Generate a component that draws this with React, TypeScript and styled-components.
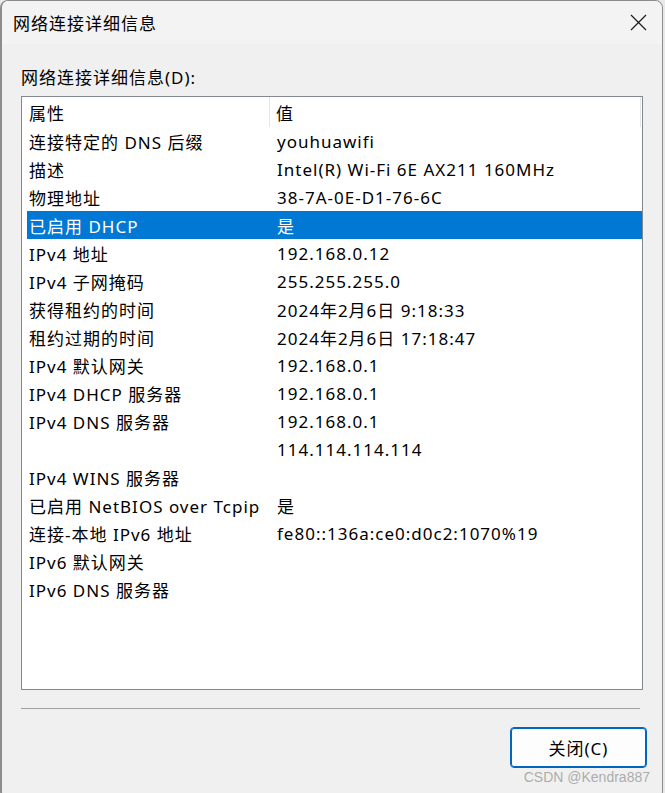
import React from 'react';
import styled, { createGlobalStyle } from 'styled-components';

const Global = createGlobalStyle`
  html, body {
    margin: 0;
    padding: 0;
    background: #e9e9e9;
  }
  body {
    font-family: 'Noto Sans', 'Noto Sans CJK SC', sans-serif;
    letter-spacing: 1px;
  }
`;

const Window = styled.div`
  box-sizing: border-box;
  position: relative;
  width: 663px;
  height: 800px;
  background: #f0f0f0;
  border: 1px solid #8c8c8c;
  border-left-width: 2px;
  border-radius: 8px;
  overflow: hidden;
  color: #000;
`;

const TitleBar = styled.div`
  display: flex;
  align-items: center;
  justify-content: space-between;
  height: 43px;
  padding: 0 15px 0 11px;
  background: #f3f3f3;
  font-size: 17px;
`;

const CloseIcon = styled.svg`
  width: 17px;
  height: 17px;
`;

const Body = styled.div`
  padding: 23px 18px 0 19px;
`;

const Label = styled.div`
  font-size: 17px;
  line-height: 22px;
  height: 22px;
  margin-bottom: 7px;
`;

const ListBox = styled.div`
  box-sizing: border-box;
  width: 622px;
  height: 594px;
  background: #fff;
  border: 1px solid #828790;
  font-size: 17px;
`;

const HeaderRow = styled.div`
  display: grid;
  grid-template-columns: 248px 371px;
  height: 30px;
`;

const HeaderCell = styled.div<{ $first?: boolean }>`
  display: flex;
  align-items: center;
  padding-left: ${p => (p.$first ? '7px' : '6px')};
  border-right: 1px solid #e5e5e5;
`;

const Row = styled.div<{ $selected?: boolean }>`
  display: grid;
  grid-template-columns: 243px 371px;
  height: 28px;
  margin-left: 5px;
  align-items: center;
  background: ${p => (p.$selected ? '#0078d4' : 'transparent')};
  color: ${p => (p.$selected ? '#fff' : '#000')};
  white-space: nowrap;
`;

const Cell = styled.div<{ $value?: boolean }>`
  padding-left: ${p => (p.$value ? '7px' : '2px')};
`;

const Separator = styled.div`
  width: 619px;
  height: 1px;
  margin-top: 18px;
  background: #a0a0a0;
`;

const Footer = styled.div`
  display: flex;
  justify-content: flex-end;
  padding-top: 18px;
  margin-right: -3px;
`;

const Button = styled.button`
  box-sizing: border-box;
  width: 137px;
  height: 41px;
  background: #fdfdfd;
  border: 1px solid #0067c0;
  box-shadow: inset 0 0 0 1px #0067c0;
  border-radius: 4px;
  font-family: inherit;
  letter-spacing: inherit;
  font-size: 17px;
  color: #000;
`;

const Watermark = styled.div`
  position: absolute;
  right: 12px;
  bottom: 14px;
  font-family: 'Liberation Sans', sans-serif;
  letter-spacing: 0;
  font-size: 14px;
  color: rgba(140, 140, 140, 0.7);
`;

const rows: [string, string, boolean?][] = [
  ['连接特定的 DNS 后缀', 'youhuawifi'],
  ['描述', 'Intel(R) Wi-Fi 6E AX211 160MHz'],
  ['物理地址', '38-7A-0E-D1-76-6C'],
  ['已启用 DHCP', '是', true],
  ['IPv4 地址', '192.168.0.12'],
  ['IPv4 子网掩码', '255.255.255.0'],
  ['获得租约的时间', '2024年2月6日 9:18:33'],
  ['租约过期的时间', '2024年2月6日 17:18:47'],
  ['IPv4 默认网关', '192.168.0.1'],
  ['IPv4 DHCP 服务器', '192.168.0.1'],
  ['IPv4 DNS 服务器', '192.168.0.1'],
  ['', '114.114.114.114'],
  ['IPv4 WINS 服务器', ''],
  ['已启用 NetBIOS over Tcpip', '是'],
  ['连接-本地 IPv6 地址', 'fe80::136a:ce0:d0c2:1070%19'],
  ['IPv6 默认网关', ''],
  ['IPv6 DNS 服务器', ''],
];

export default function App() {
  return (
    <>
      <Global />
      <Window>
        <TitleBar>
          <span>网络连接详细信息</span>
          <CloseIcon viewBox="0 0 17 17">
            <path d="M1 1 L16 16 M16 1 L1 16" stroke="#1a1a1a" strokeWidth="1.2" fill="none" />
          </CloseIcon>
        </TitleBar>
        <Body>
          <Label>网络连接详细信息(D):</Label>
          <ListBox>
            <HeaderRow>
              <HeaderCell $first>属性</HeaderCell>
              <HeaderCell>值</HeaderCell>
            </HeaderRow>
            {rows.map(([name, value, selected], i) => (
              <Row key={i} $selected={selected}>
                <Cell>{name}</Cell>
                <Cell $value>{value}</Cell>
              </Row>
            ))}
          </ListBox>
          <Separator />
          <Footer>
            <Button>关闭(C)</Button>
          </Footer>
        </Body>
        <Watermark>CSDN @Kendra887</Watermark>
      </Window>
    </>
  );
}
